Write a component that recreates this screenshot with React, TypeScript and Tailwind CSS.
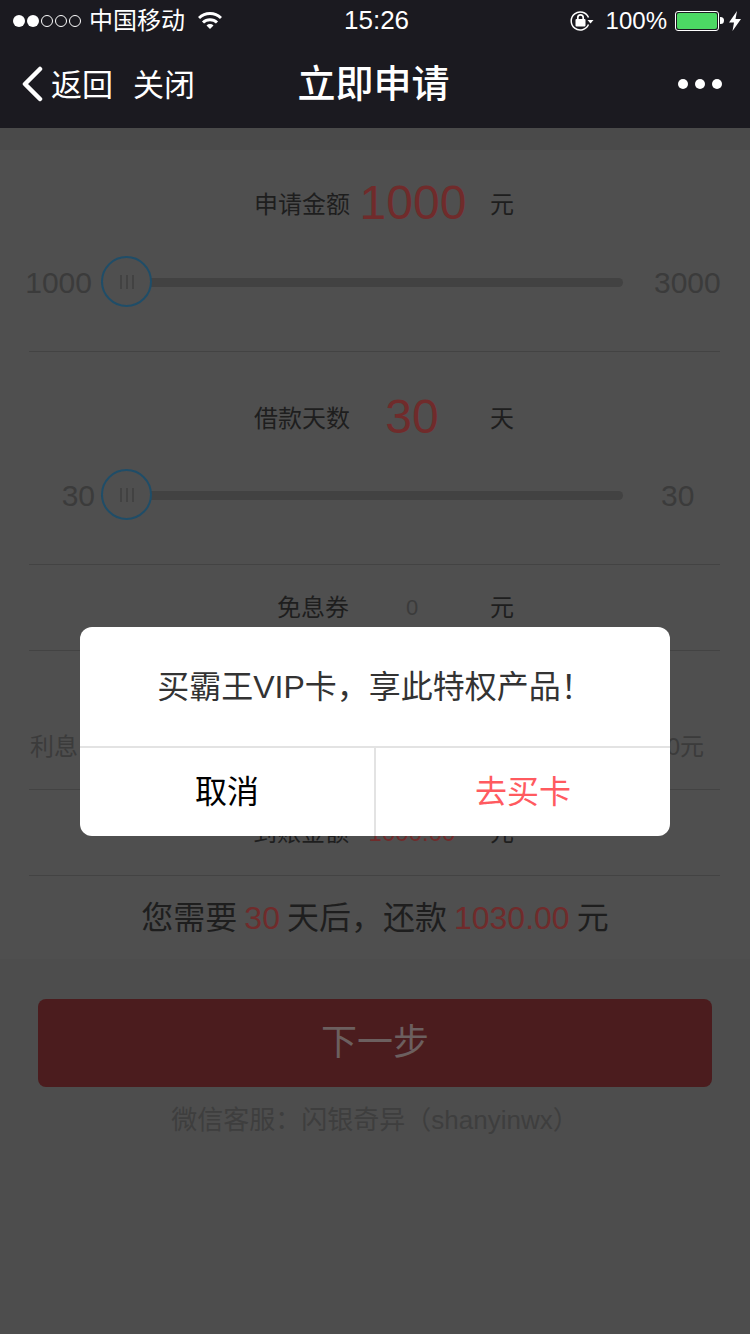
import React from "react";

const font = "font-['Liberation_Sans','Noto_Sans_CJK_SC',sans-serif]";

const Slider = ({ min, max, minClass, maxClass }: { min: string; max: string; minClass: string; maxClass: string }) => (
  <div className="flex items-center h-[52px] text-[30px] text-[#3b3b3b]">
    <span className={`w-[95px] text-right pl-[20px] ${minClass}`}>{min}</span>
    <div className="relative w-[522px] ml-[6px] h-[52px] flex items-center">
      <div className="w-full h-[9px] rounded-full bg-[#424242]" />
      <div className="absolute left-0 top-0 w-[51px] h-[51px] rounded-full border-2 border-[#1f4d68] bg-[#4f4f4f] flex items-center justify-center gap-[4px]">
        <i className="w-[2px] h-[14px] bg-[#424242]" />
        <i className="w-[2px] h-[14px] bg-[#424242]" />
        <i className="w-[2px] h-[14px] bg-[#424242]" />
      </div>
    </div>
    <span className={maxClass}>{max}</span>
  </div>
);

const ValueRow = ({ label, value, valueClass }: { label: string; value: string; valueClass: string }) => (
  <div className="flex items-center h-[85px]">
    <span className="w-[349px] text-right text-[24px] text-[#1e1e1e]">{label}</span>
    <span className={`w-[126px] text-center ${valueClass}`}>{value}</span>
    <span className="text-[24px] text-[#1e1e1e] ml-[15px]">元</span>
  </div>
);

const Divider = () => <div className="ml-[29px] mr-[30px] border-t border-[#434343]" />;

export default function App() {
  return (
    <div className={`relative w-[750px] h-[1334px] overflow-hidden bg-[#4d4d4d] ${font}`}>
      {/* status bar */}
      <div className="h-[40px] pt-[1px] bg-[#1b1a20] flex items-center text-white pl-[13px] pr-[9px]">
        <div className="flex items-center gap-[2px]">
          <i className="w-[12px] h-[12px] rounded-full bg-white" />
          <i className="w-[12px] h-[12px] rounded-full bg-white" />
          <i className="w-[12px] h-[12px] rounded-full border border-white" />
          <i className="w-[12px] h-[12px] rounded-full border border-white" />
          <i className="w-[12px] h-[12px] rounded-full border border-white" />
        </div>
        <span className="ml-[8px] text-[24px] leading-none">中国移动</span>
        <svg className="ml-[13px]" width="24" height="18" viewBox="0 0 24 18" fill="none" stroke="#fff" strokeWidth="3">
          <path d="M1 6a16 16 0 0 1 22 0" />
          <path d="M5 10.500a10 10 0 0 1 14 0" />
          <path d="M12 17l-3.500-3.500a5 5 0 0 1 7 0z" fill="#fff" stroke="none" />
        </svg>
        <span className="absolute left-[344px] top-[6px] text-[26px] leading-[29px] font-medium">15:26</span>
        <div className="ml-auto flex items-center">
          <svg width="24" height="20" viewBox="0 0 24 20" fill="none" stroke="#fff" strokeWidth="1.500">
            <path d="M18.500 6.500A9 9 0 1 0 18.500 13.500" />
            <path d="M17.500 9h6l-3 3.500z" fill="#fff" stroke="none" />
            <rect x="5.500" y="8" width="10" height="7.500" rx="1" fill="#fff" stroke="none" />
            <path d="M7.800 8.500V6.500a2.700 2.700 0 0 1 5.400 0v2" strokeWidth="1.700" />
          </svg>
          <span className="ml-[12px] text-[24px] leading-none">100%</span>
          <div className="ml-[8px] w-[44px] h-[20px] rounded-[3px] border border-white p-[1px]">
            <div className="w-full h-full rounded-[2px] bg-[#4cd964]" />
          </div>
          <i className="ml-[1px] w-[4px] h-[7px] rounded-r-full bg-white" />
          <svg className="ml-[5px]" width="12" height="20" viewBox="0 0 12 20" fill="#fff">
            <path d="M8 0L0 11.500h5L3.500 20 12 8H6.500z" />
          </svg>
        </div>
      </div>

      {/* nav bar */}
      <div className="relative h-[88px] bg-[#1b1a20] flex items-center text-white">
        <svg className="ml-[22px]" width="21" height="36" viewBox="0 0 21 36" fill="none" stroke="#fff" strokeWidth="4.500" strokeLinecap="round" strokeLinejoin="round">
          <path d="M18 3L3 18l15 15" />
        </svg>
        <span className="ml-[8px] mt-[2px] text-[31px] leading-none">返回</span>
        <span className="ml-[20px] mt-[2px] text-[31px] leading-none">关闭</span>
        <span className="absolute left-0 right-0 text-center text-[38px] leading-none font-medium pr-[3px]">立即申请</span>
        <div className="ml-auto mr-[28px] flex gap-[7px]">
          <i className="w-[10px] h-[10px] rounded-full bg-white" />
          <i className="w-[10px] h-[10px] rounded-full bg-white" />
          <i className="w-[10px] h-[10px] rounded-full bg-white" />
        </div>
      </div>

      {/* form */}
      <div className="h-[22px] bg-[#4a4a4a]" />
      <div className="h-[809px] pt-[25px] bg-[#4f4f4f]">
        <div className="flex items-center h-[60px]">
          <span className="w-[350px] text-right text-[24px] text-[#1e1e1e]">申请金额</span>
          <span className="w-[126px] mb-[4px] text-center text-[48px] text-[#702b2b]">1000</span>
          <span className="ml-[14px] text-[24px] text-[#1e1e1e]">元</span>
        </div>
        <div className="mt-[21px]">
          <Slider min="1000" max="3000" minClass="pr-[3px]" maxClass="ml-[31px]" />
        </div>
        <div className="mt-[43px]">
          <Divider />
        </div>

        <div className="flex items-center h-[60px] mt-[37px]">
          <span className="w-[350px] text-right text-[24px] text-[#1e1e1e]">借款天数</span>
          <span className="w-[124px] mb-[4px] text-center text-[48px] text-[#702b2b]">30</span>
          <span className="ml-[16px] text-[24px] text-[#1e1e1e]">天</span>
        </div>
        <div className="mt-[20px]">
          <Slider min="30" max="30" minClass="pr-0" maxClass="ml-[38px]" />
        </div>
        <div className="mt-[43px]">
          <Divider />
        </div>

        <ValueRow label="免息券" value="0" valueClass="text-[22px] text-[#3b3b3b]" />
        <Divider />

        <div className="flex items-center justify-between h-[138px] pt-[54px] pl-[30px] pr-[46px] text-[24px] text-[#3b3b3b]">
          <span>利息</span>
          <span>30.00元</span>
        </div>
        <Divider />

        <ValueRow label="到账金额" value="1000.00" valueClass="text-[24px] text-[#702b2b]" />
        <Divider />

        <div className="flex items-center justify-center h-[84px] text-[32px] text-[#1e1e1e] gap-[7px]">
          <span>您需要</span>
          <span className="text-[#702b2b]">30</span>
          <span>天后，还款</span>
          <span className="text-[#702b2b]">1030.00</span>
          <span>元</span>
        </div>
      </div>

      {/* footer */}
      <div className="px-[38px] pt-[40px]">
        <div className="h-[88px] rounded-[8px] bg-[#4b1c1e] flex items-center justify-center text-[36px] text-[#6c5f5f]">下一步</div>
        <p className="mt-[16px] text-center text-[26px] leading-[34px] text-[#3e3e3e]">微信客服：闪银奇异（shanyinwx）</p>
      </div>

      {/* dialog */}
      <div className="absolute left-[80px] top-[627px] w-[590px] h-[209px] rounded-[12px] bg-white flex flex-col overflow-hidden">
        <div className="h-[121px] flex items-center justify-center text-[32px] text-[#333333] border-b-2 border-[#e3e3e3]">买霸王VIP卡，享此特权产品！</div>
        <div className="flex-1 flex text-[32px]">
          <div className="w-[296px] flex items-center justify-center text-black border-r-2 border-[#e3e3e3]">取消</div>
          <div className="flex-1 flex items-center justify-center text-[#ff5a5f]">去买卡</div>
        </div>
      </div>
    </div>
  );
}
